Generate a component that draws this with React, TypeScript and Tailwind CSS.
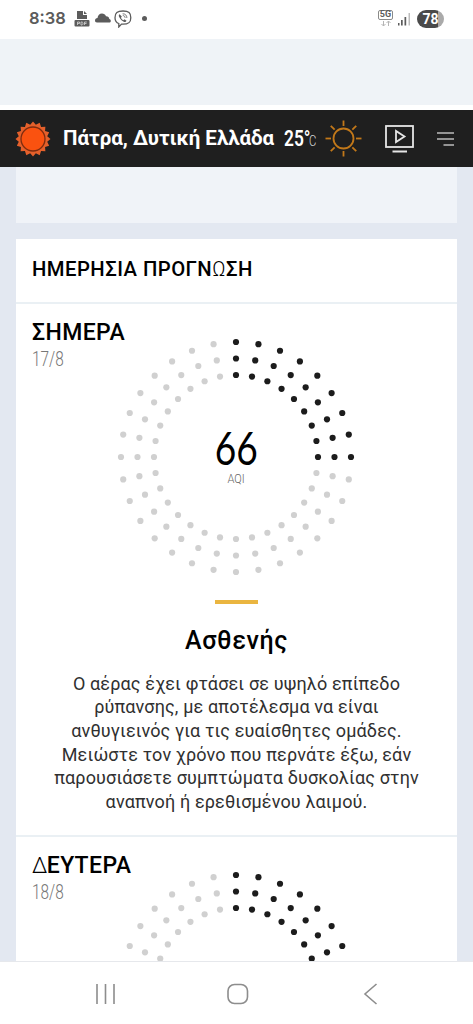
interface Day {
  name: React.ReactNode;
  date: string;
  aqi?: number;
  level?: string;
  advice?: string[];
}

const days: Day[] = [
  {
    name: "ΣΗΜΕΡΑ",
    date: "17/8",
    aqi: 66,
    level: "Ασθενής",
    advice: [
      "Ο αέρας έχει φτάσει σε υψηλό επίπεδο",
      "ρύπανσης, με αποτέλεσμα να είναι",
      "ανθυγιεινός για τις ευαίσθητες ομάδες.",
      "Μειώστε τον χρόνο που περνάτε έξω, εάν",
      "παρουσιάσετε συμπτώματα δυσκολίας στην",
      "αναπνοή ή ερεθισμένου λαιμού.",
    ],
  },
  {
    name: (
      <>
        <span className="text-[22px] font-light -mr-px">Δ</span>ΕΥΤΕΡΑ
      </>
    ),
    date: "18/8",
  },
];

const RINGS = [115, 98.5, 82];
const STEPS = 32;
const ACTIVE_STEPS = 8;

function AqiDial() {
  return (
    <svg width="241" height="240" viewBox="-120 -120 241 240">
      {RINGS.map((r) =>
        Array.from({ length: STEPS }, (_, i) => {
          const a = (i / STEPS) * Math.PI * 2;
          return (
            <circle
              key={`${r}-${i}`}
              cx={Math.sin(a) * r}
              cy={-Math.cos(a) * r}
              r="3.1"
              fill={i <= ACTIVE_STEPS ? "#1c1c1c" : "#d0d0d0"}
            />
          );
        })
      )}
    </svg>
  );
}

function StatusBar() {
  return (
    <div className="flex h-[39px] shrink-0 items-center bg-white pr-[29px] pl-[29px] text-[#5c5c5c]">
      <span className="w-[38px] text-[16.5px] leading-none font-semibold whitespace-nowrap font-['Inter',sans-serif] -mt-[2px]">8:38</span>
      {/* pdf file */}
      <svg className="ml-[7px] -mt-[2px]" width="16" height="16" viewBox="0 0 16 16">
        <path d="M3 0h6v4h4v4H3z" fill="#5c5c5c" />
        <path d="M10 0l3 3h-3z" fill="#5c5c5c" />
        <rect x="0.5" y="9" width="15" height="6.5" rx="1" fill="#5c5c5c" />
        <path d="M3.5 14v-3h2v1.5h-2M7 11v3h1.2l.8-.8v-1.4l-.8-.8zM10.5 14v-3h2.3M10.5 12.5h2" fill="none" stroke="#d5d5d5" strokeWidth="0.8" />
      </svg>
      <svg className="ml-[5px] -mt-[3px]" width="16" height="10" viewBox="0 0 16 10">
        <path d="M2 9.500C.6 9.500 0 8.600 0 7.500 0 6 1 5 2.500 5 2.800 2.500 4.500.5 7 .5c1.800 0 3.300 1 4 2.800 2-.1 3 1 3.300 2.700 1 .2 1.500 1 1.500 1.900 0 1-.7 1.600-1.800 1.600z" fill="#5c5c5c" />
      </svg>
      {/* viber */}
      <svg className="ml-[3px] -mt-[2px]" width="18" height="18" viewBox="0 0 18 18" fill="none" stroke="#5c5c5c" strokeWidth="1.300" strokeLinecap="round">
        <path d="M9 1c5.800 0 7.800 1.600 7.800 6.700 0 4.900-2.200 6.500-7.800 6.500-.6 0-1 0-1.500-.1L4.800 17v-3.500C2.100 12.600 1 11 1 7.700 1 2.600 3.200 1 9 1z" />
        <path d="M5.600 4.200c-1 .7-1 1.500-.4 2.900 1 2.200 2.700 3.900 5 4.800 1.100.4 1.800 0 2.300-1.100l-2-1.500-1.100.9c-1.200-.5-2-1.400-2.400-2.500l.8-1.100z" fill="#5c5c5c" stroke="none" />
        <path d="M9 3.800c2.300 0 3.800 1.400 3.900 3.800M9.200 5.600c1.200.1 1.800.7 1.900 1.900" strokeWidth="0.800" />
      </svg>
      <span className="ml-[10px] -mt-[2px] h-[5px] w-[5px] rounded-full bg-[#5c5c5c]" />

      <div className="ml-auto flex items-center">
        <div className="flex flex-col items-center -mt-[3px]">
          <span className="flex h-[10px] w-[15px] items-center justify-center rounded-[2px] border border-[#8a8a8a] text-[9px] leading-none font-bold font-['Roboto',sans-serif]">5G</span>
          <svg width="12" height="7" viewBox="0 0 12 7" fill="none" stroke="#b5b5b5" strokeWidth="1">
            <path d="M3.500 1v5M1.500 4l2 2 2-2M8.500 6V1M6.500 3l2-2 2 2" />
          </svg>
        </div>
        <svg className="ml-[4px] -mt-px" width="14" height="13" viewBox="0 0 14 13">
          <rect x="1" y="10" width="1.500" height="2.500" fill="#5c5c5c" />
          <rect x="4" y="7" width="1.700" height="5.500" fill="#5c5c5c" />
          <rect x="7.500" y="4" width="1.700" height="8.500" fill="#5c5c5c" />
          <rect x="11.500" y="0" width="1.500" height="12.500" fill="#bdbdbd" />
        </svg>
        <span className="-mt-[2px] ml-[6px] flex h-[18px] w-[27px] items-center justify-center rounded-full bg-linear-to-r from-[#4a4a4a] from-78% to-[#aaa] to-78% text-[14px] leading-none font-bold text-white font-['Roboto',sans-serif]">
          78
        </span>
      </div>
    </div>
  );
}

function Header() {
  const points = Array.from({ length: 32 }, (_, i) => {
    const a = (i / 32) * Math.PI * 2;
    const r = i % 2 === 0 ? 17.5 : 14.5;
    return `${Math.sin(a) * r},${-Math.cos(a) * r}`;
  }).join(" ");

  return (
    <header className="flex h-[57px] shrink-0 items-center bg-[#1f1f1f] pl-[15px] text-white">
      <svg className="shrink-0" width="36" height="36" viewBox="-18 -18 36 36">
        <polygon points={points} fill="#e4602b" />
        <circle r="12" fill="#fa5210" stroke="#7d2c10" strokeWidth="1.300" />
      </svg>
      <span className="ml-[12px] w-[211px] text-[20.5px] leading-none font-bold whitespace-nowrap">Πάτρα, Δυτική Ελλάδα</span>
      <span className="ml-[10px] flex w-[33px] items-baseline leading-none whitespace-nowrap">
        <span className="w-[25px] origin-left scale-x-77 text-[22.5px] font-semibold">25°</span>
        <span className="origin-left scale-x-75 text-[15px] font-light text-[#ddd]">C</span>
      </span>
      <svg className="ml-[8px] shrink-0" width="37" height="37" viewBox="-18.500 -18.500 37 37" fill="none" stroke="#c27819" strokeWidth="1.800">
        <circle r="10" />
        {[0, 45, 90, 135, 180, 225, 270, 315].map((deg) => (
          <path key={deg} d="M0-12.500v-5.500" transform={`rotate(${deg})`} />
        ))}
      </svg>
      <svg className="ml-[23px] shrink-0" width="29" height="28" viewBox="0 0 29 28" fill="none" stroke="#e6e6e6" strokeWidth="1.800">
        <rect x="1" y="1" width="27" height="21" />
        <path d="M11 6v11l8.500-5.500zM7.500 26.500h14.500" />
      </svg>
      <svg className="ml-[23px] shrink-0" width="18" height="16" viewBox="0 0 18 16" stroke="#bcbcbc" strokeWidth="1.500">
        <path d="M0 2h17M0 8h17M6.500 14H17" />
      </svg>
    </header>
  );
}

function DayForecast({ day }: { day: Day }) {
  return (
    <section className="relative h-[533px] shrink-0 border-t-2 border-[#eaf0f4]">
      <div className="absolute top-[16px] left-4">
        <h3 className="text-[23px] leading-[26px] font-medium tracking-[0.4px] text-black">{day.name}</h3>
        <p className="origin-left scale-x-75 text-[20.5px] leading-[26px] font-light text-[#777]">{day.date}</p>
      </div>
      <div className="grid justify-center pt-[33px]">
        <div className="col-start-1 row-start-1">
          <AqiDial />
        </div>
        {day.aqi && (
          <div className="col-start-1 row-start-1 flex flex-col items-center pt-[82px]">
            <span className="scale-x-79 text-[47px] leading-[56px] text-black font-['Lato',sans-serif]">{day.aqi}</span>
            <span className="scale-x-85 text-[13px] leading-[14px] font-light -mt-[3px] text-[#666]">AQI</span>
          </div>
        )}
      </div>
      {day.level && (
        <>
          <div className="mx-auto mt-[23px] h-1 w-[43px] bg-[#eab540]" />
          <h4 className="mt-[21px] text-center text-[25px] leading-[32px] font-medium tracking-[0.6px] text-black">{day.level}</h4>
        </>
      )}
      <p className="mt-[15px] text-center text-[18px] leading-[23.7px] tracking-[0.14px] text-[#303030]">
        {day.advice?.map((line) => (
          <span key={line} className="block whitespace-nowrap">
            {line}
          </span>
        ))}
      </p>
    </section>
  );
}

function NavBar() {
  return (
    <nav className="flex h-[62px] shrink-0 items-center bg-white pt-[2px] pl-[95px]">
      <svg width="284" height="24" viewBox="0 0 284 24" fill="none" stroke="#8d8d8d" strokeWidth="1.600">
        <path d="M2 2v20M10.500 2v20M19 2v20" />
        <rect x="133" y="2.500" width="19.500" height="19" rx="6.500" />
        <path d="M281.500 2L270 12l11.500 10" />
      </svg>
    </nav>
  );
}

export default function App() {
  return (
    <div className="flex h-[1024px] w-[473px] flex-col overflow-hidden bg-white font-['Roboto',sans-serif]">
      <StatusBar />
      <div className="h-[66px] shrink-0 bg-[#eff3f7]" />
      <div className="h-[5px] shrink-0 bg-white" />
      <Header />
      <main className="flex min-h-0 flex-1 flex-col overflow-hidden border-b border-[#e6e8ec] bg-[#e3e8f1] px-4">
        <div className="h-[56px] shrink-0 bg-[#f0f3f8]" />
        <div className="mt-[15.5px] flex shrink-0 flex-col bg-white">
          <h2 className="h-[63px] px-4 text-[20.3px] leading-[61px] font-medium tracking-[0.45px] text-black">
            ΗΜΕΡΗΣΙΑ ΠΡΟΓΝ<span className="font-light">Ω</span>ΣΗ
          </h2>
          {days.map((day) => (
            <DayForecast key={day.date} day={day} />
          ))}
        </div>
      </main>
      <NavBar />
    </div>
  );
}
